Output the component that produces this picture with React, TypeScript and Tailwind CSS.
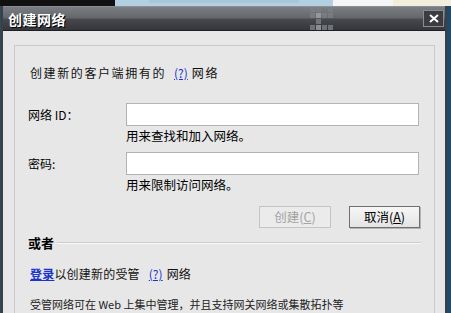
import React from "react";

const cjk = { fontFamily: '"Noto Sans CJK SC", "Noto Sans", sans-serif' };

function Grid() {
  const cells = [
    [1, 1, 0, 1],
    [1, 2, 1, 1],
    [0, 1, 0, 0],
    [1, 2, 1, 1],
  ];
  return (
    <div className="flex flex-col gap-[1px]">
      {cells.map((r, i) => (
        <div key={i} className="flex gap-[1px]">
          {r.map((c, j) => (
            <div
              key={j}
              className={
                c === 2
                  ? "w-[5px] h-[5px] bg-[#a0a3a8]"
                  : c === 1
                  ? "w-[5px] h-[5px] bg-[#7c7f85]"
                  : "w-[5px] h-[5px] bg-transparent"
              }
            />
          ))}
        </div>
      ))}
    </div>
  );
}

export default function App() {
  return (
    <div className="w-[451px] h-[313px] overflow-hidden bg-[#1a1a1a] flex flex-col" style={cjk}>
      {/* desktop strip */}
      <div className="h-[6px] flex shrink-0">
        <div className="w-[115px] bg-[#111]" />
        <div className="w-[218px] bg-[#b3d0e2] flex justify-center">
          <div className="w-[150px] h-[3px] bg-[#a9c6d9]" />
        </div>
        <div className="w-[60px] bg-[#f4f4f4]" />
        <div className="flex-1 bg-[#f2eede]" />
      </div>
      <div className="flex flex-1 min-h-0">
        <div className="w-[1px] bg-[#2a4a60]" />
        {/* window */}
        <div className="w-[446px] flex flex-col border-l-[2px] border-r-[2px] border-[#3d3f44] bg-[#3d3f44]">
          {/* title bar */}
          <div className="h-[25px] shrink-0 flex items-center relative bg-[linear-gradient(to_bottom,#7a7d82_0%,#65686d_45%,#46484d_55%,#34363b_100%)] border-t border-[#8a8d92] border-b border-b-[#1f2024]">
            <div className="pl-[5px] text-white font-bold text-[14px] leading-none tracking-[0.5px] [text-shadow:1px_1px_0_#000]">
              创建网络
            </div>
            <div className="ml-[244px] opacity-80">
              <Grid />
            </div>
            <div className="ml-auto mr-[1px] w-[21px] h-[17px] border border-[#8a8c90] bg-[#3a3c41] flex items-center justify-center">
              <svg width="10" height="9" viewBox="0 0 10 9">
                <path d="M1 1 L9 8 M9 1 L1 8" stroke="#fff" strokeWidth="2" />
              </svg>
            </div>
          </div>
          {/* content */}
          <div className="flex-1 bg-[#e7e7e7] pl-[11px] pr-[10px] pt-[14px]">
            <div className="h-full border-t border-l border-r border-[#cacaca] pl-[13px] pr-[13px] text-[12px] text-black">
              <div className="mt-[20px] h-[14px] flex items-center tracking-[1.6px] text-[#111]">
                <span className="ml-[2px]">创建新的客户端拥有的</span>
                <span className="ml-[8px] text-[#1a33cc] underline tracking-normal">(?)</span>
                <span className="ml-[4px]">网络</span>
              </div>
              <div className="mt-[23px] flex items-center">
                <div className="w-[98px] text-[12px]">网络 ID：</div>
                <div className="w-[293px] h-[23px] bg-white border border-[#b3b3b3]" />
              </div>
              <div className="ml-[98px] mt-[2px] h-[16px] leading-[16px] text-[12.5px]">用来查找和加入网络。</div>
              <div className="mt-[8px] flex items-center">
                <div className="w-[98px] text-[12px]">密码:</div>
                <div className="w-[293px] h-[23px] bg-white border border-[#b3b3b3]" />
              </div>
              <div className="ml-[98px] mt-[2px] h-[16px] leading-[16px] text-[12.5px]">用来限制访问网络。</div>
              <div className="mt-[13px] flex justify-end pr-[1px]">
                <div className="w-[72px] h-[22px] border border-[#c4c4c4] bg-[#ebebeb] text-[#a3a3a3] text-[12.5px] flex items-center justify-center">
                  创建(<span className="underline">C</span>)
                </div>
                <div className="ml-[18px] w-[71px] h-[22px] border border-[#6f6f6f] bg-[linear-gradient(to_bottom,#f6f6f6,#e4e4e4)] shadow-[1px_1px_0_#b5b5b5] text-[12.5px] flex items-center justify-center">
                  取消(<span className="underline">A</span>)
                </div>
              </div>
              <div className="mt-[6px] flex items-center">
                <div className="font-bold text-[13px] leading-[18px]">或者</div>
                <div className="flex-1 ml-[3px] h-[2px] border-t border-[#cbcbcb] border-b border-b-[#fafafa]" />
              </div>
              <div className="mt-[15px] h-[14px] flex items-center tracking-[0.2px] text-[#111]">
                <span className="ml-[2px] text-[#1a33cc] underline font-bold">登录</span>
                <span>以创建新的受管</span>
                <span className="ml-[9px] text-[#1a33cc] underline tracking-normal">(?)</span>
                <span className="ml-[4px]">网络</span>
              </div>
              <div className="mt-[16px] h-[14px] flex items-center text-[#222] text-[11px] whitespace-nowrap">
                <span className="ml-[2px]">受管网络可在 Web 上集中管理，并且支持网关网络或集散拓扑等</span>
              </div>
            </div>
          </div>
        </div>
        <div className="flex-1 bg-[#1d4b6e]" />
      </div>
    </div>
  );
}
